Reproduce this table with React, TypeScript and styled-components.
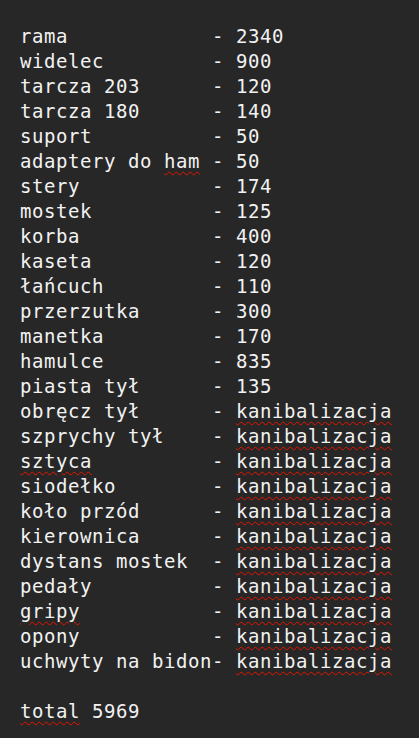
import React from "react";
import styled, { createGlobalStyle } from "styled-components";

const GlobalStyle = createGlobalStyle`
  html, body {
    margin: 0;
    padding: 0;
    background-color: #272727;
  }
`;

// [name, value, misspelled words in name, value misspelled]
type Part = { text: string; wrong?: boolean };

const items: Part[][] = [
  [{ text: "rama            - 2340" }],
  [{ text: "widelec         - 900" }],
  [{ text: "tarcza 203      - 120" }],
  [{ text: "tarcza 180      - 140" }],
  [{ text: "suport          - 50" }],
  [{ text: "adaptery do " }, { text: "ham", wrong: true }, { text: " - 50" }],
  [{ text: "stery           - 174" }],
  [{ text: "mostek          - 125" }],
  [{ text: "korba           - 400" }],
  [{ text: "kaseta          - 120" }],
  [{ text: "łańcuch         - 110" }],
  [{ text: "przerzutka      - 300" }],
  [{ text: "manetka         - 170" }],
  [{ text: "hamulce         - 835" }],
  [{ text: "piasta tył      - 135" }],
  ...[
    "obręcz tył      ",
    "szprychy tył    ",
    "sztyca          ",
    "siodełko        ",
    "koło przód      ",
    "kierownica      ",
    "dystans mostek  ",
    "pedały          ",
    "gripy           ",
    "opony           ",
    "uchwyty na bidon",
  ].map((name): Part[] => {
    const label = name.trimEnd();
    const pad = name.slice(label.length);
    const wrongName = label === "sztyca" || label === "gripy";
    return [
      { text: label, wrong: wrongName },
      { text: pad + "- " },
      { text: "kanibalizacja", wrong: true },
    ];
  }),
];

const App: React.FC = () => {
  return (
    <>
      <GlobalStyle />
      <Note>
        {items.map((parts, i) => (
          <Line key={i}>
            {parts.map((p, j) =>
              p.wrong ? <Misspelled key={j}>{p.text}</Misspelled> : <span key={j}>{p.text}</span>
            )}
          </Line>
        ))}
        <Line>{" "}</Line>
        <Line>
          <Misspelled>total</Misspelled> 5969
        </Line>
      </Note>
    </>
  );
};

const Note = styled.div`
  padding: 24px 20px 0 20px;
  min-height: 738px;
  box-sizing: border-box;
  background-color: #272727;
  color: #f2f2f2;
  font-family: "DejaVu Sans Mono", "Liberation Mono", monospace;
  font-size: 19px;
  letter-spacing: 0.56px;
`;

const Line = styled.div`
  height: 25px;
  line-height: 25px;
  white-space: pre;
`;

const Misspelled = styled.span`
  text-decoration: underline wavy #e51400;
  text-decoration-thickness: 1px;
  text-underline-offset: 3px;
`;

export default App;
